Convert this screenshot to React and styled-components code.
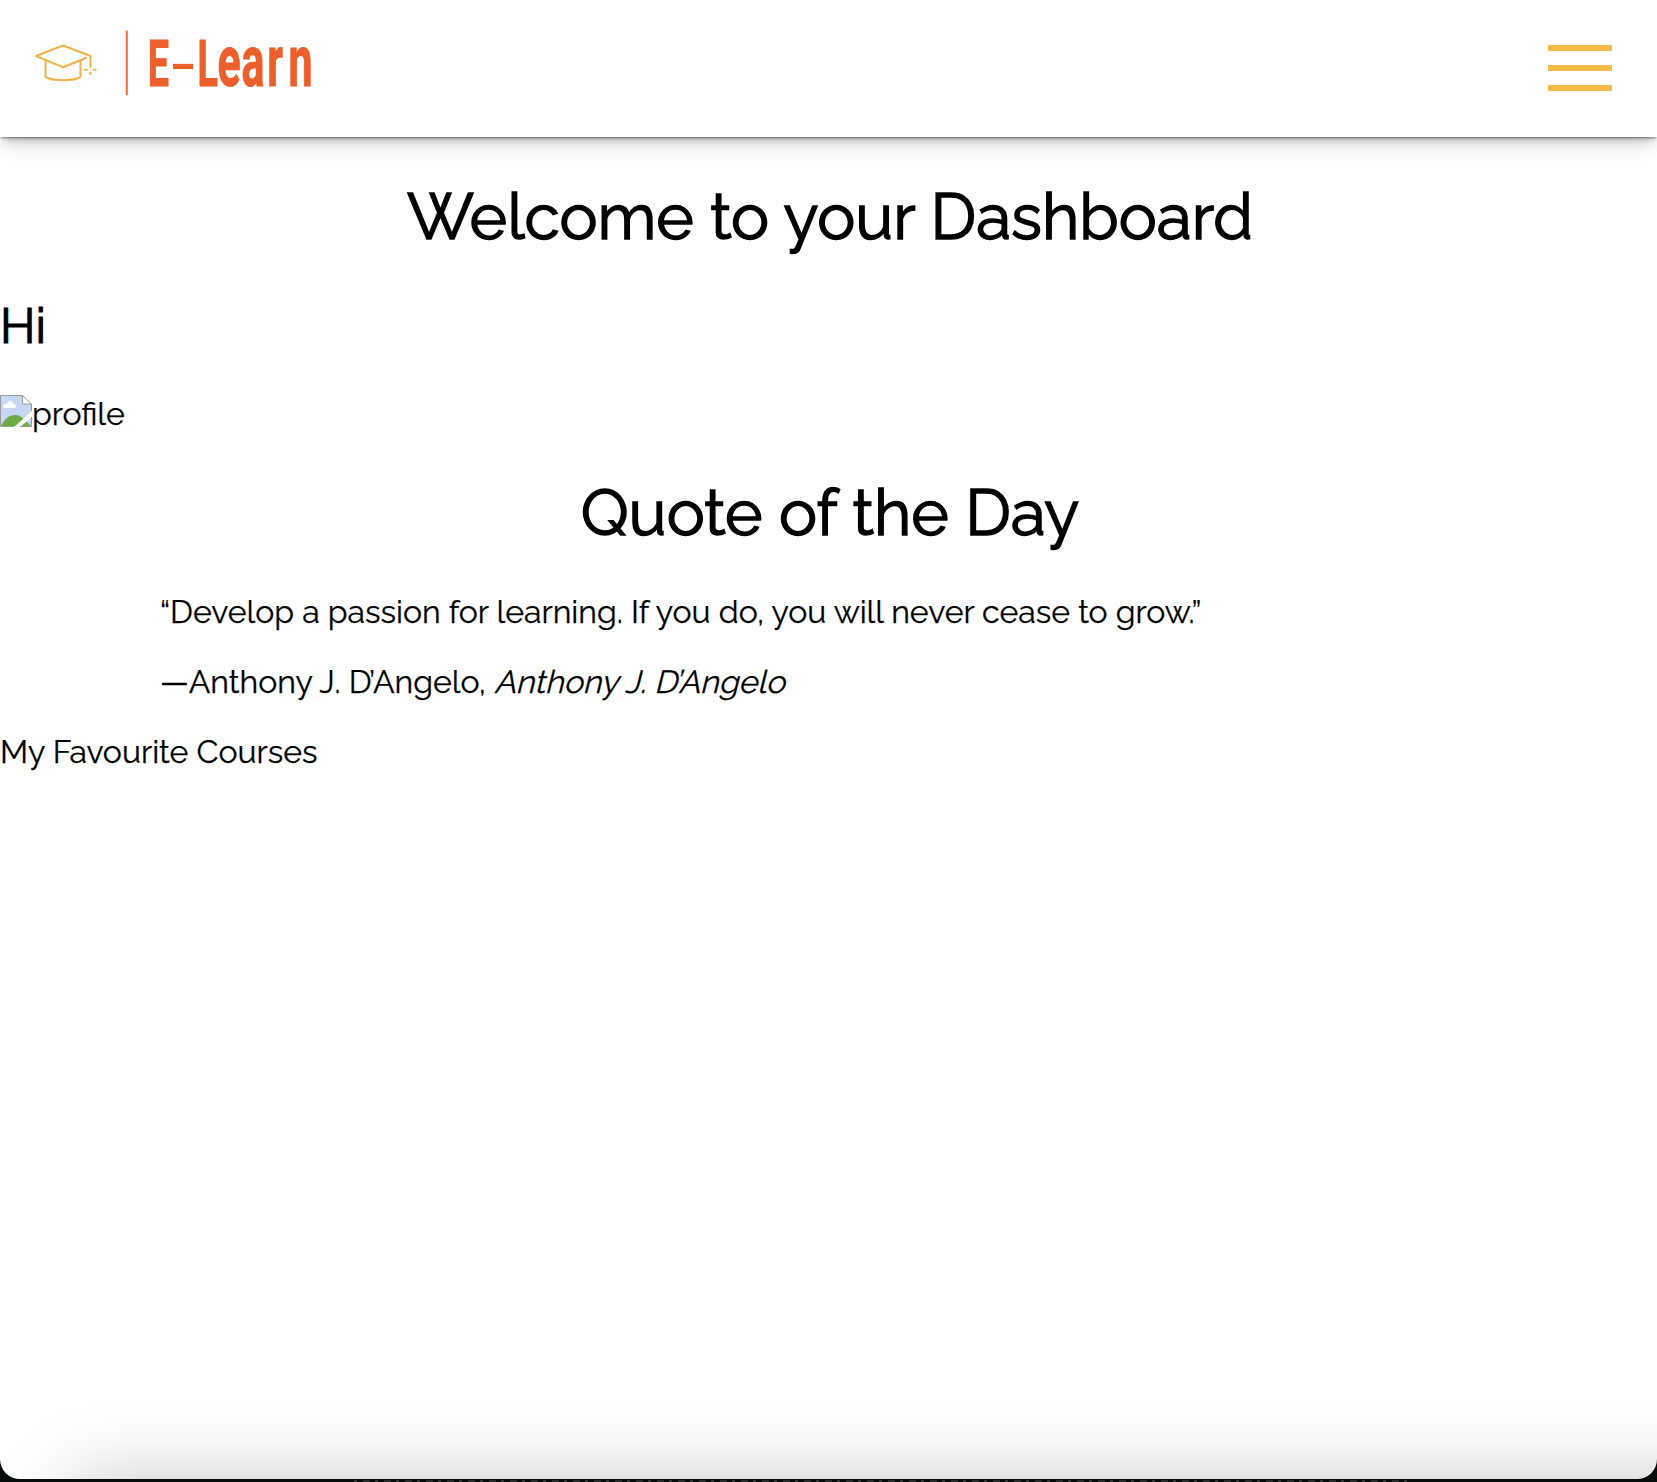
import React from "react";
import styled, { createGlobalStyle } from "styled-components";

const GlobalStyle = createGlobalStyle`
  * { box-sizing: border-box; }
  body {
    margin: 0;
    background: #060b0b;
    color: #000;
    font-family: Raleway, Lato, "Open Sans", sans-serif;
    font-size: 32px;
    line-height: 38px;
    -webkit-text-stroke: 0.25px #000;
  }
`;

const Desktop = styled.div`
  height: 1482px;
  overflow: hidden;
  display: flex;
  flex-direction: column;
  background: #060b0b;
`;

const Window = styled.div`
  position: relative;
  height: 1479px;
  flex: none;
  background: #fff;
  border-radius: 0 0 20px 20px;
  overflow: hidden;

  &::after {
    content: "";
    position: absolute;
    left: 72px;
    right: -120px;
    top: 100%;
    height: 200px;
    box-shadow: 0 0 78px rgba(0, 0, 0, 0.22);
    pointer-events: none;
  }
`;

const Backdrop = styled.div`
  height: 3px;
  margin: 0 250px 0 354px;
  background: repeating-linear-gradient(90deg, #303535 0 3px, transparent 3px 9px, #262b2b 9px 16px, transparent 16px 21px);
  clip-path: inset(1px 0 0 0);
`;

const Header = styled.header`
  display: flex;
  justify-content: space-between;
  height: 137px;
  padding: 0 45px 0 32px;
  background: #fff;
  box-shadow: 0 2px 2px -1px rgba(0, 0, 0, 0.4), 0 6px 6px -4px rgba(0, 0, 0, 0.22), 0 6px 20px -2px rgba(0, 0, 0, 0.24);
`;

const Logo = styled.svg`
  display: block;
  width: 300px;
  height: 137px;
  overflow: visible;
`;

const Wordmark = styled.text`
  font-family: Roboto, sans-serif;
  font-weight: 700;
  font-size: 65px;
  fill: #ec5e2a;
  stroke: #ec5e2a;
  stroke-width: ${(p) => p.$stroke}px;
`;

const MenuButton = styled.button`
  display: flex;
  flex-direction: column;
  gap: 14px;
  width: 64px;
  margin: 45px 0 0;
  padding: 0;
  border: 0;
  background: none;
`;

const MenuBar = styled.span`
  height: 6px;
  background: #f4bc45;
`;

const Title = styled.h1`
  margin: ${(p) => p.$top}px 0 0;
  padding-left: 3px;
  font-size: 64px;
  line-height: 76px;
  font-weight: 400;
  text-align: center;
  white-space: nowrap;
  -webkit-text-stroke: 1.5px #000;
`;

const Greeting = styled.h2`
  margin: 43px 0 0;
  font-size: 48px;
  line-height: 56px;
  font-weight: 400;
  -webkit-text-stroke: 1.1px #000;
`;

const Profile = styled.div`
  display: flex;
  height: 38px;
  margin-top: 40px;
`;

const AltText = styled.span`
  padding-top: 1px;
`;

const BrokenImage = styled.svg`
  width: 32px;
  height: 32px;
  margin-top: 1px;
`;

const Quote = styled.blockquote`
  margin: 42px 80px 0 160px;
`;

const Line = styled.p`
  margin: ${(p) => p.$top || 0}px 0 0;
  white-space: nowrap;
`;

const Source = styled.em`
  display: inline-block;
  font-style: normal;
  transform: skewX(-14deg);
  transform-origin: 0 78%;
`;

export default function App() {
  return (
    <>
      <GlobalStyle />
      <Desktop>
        <Window>
          <Header>
            <Logo viewBox="32 0 300 137">
              <g fill="none" stroke="#f3b248" strokeWidth="2" strokeLinejoin="round" strokeLinecap="round">
                <path d="M35.8 56L63 45.5L90.5 56V67M35.8 56L63 67.2L86 58" />
                <path d="M45.5 60.5V76C45.5 81.5 80.5 81.5 80.5 76V60.5" />
                <path d="M84.8 69.7H86.8M93.7 69.7H95.7M90.3 72.5V74" />
              </g>
              <path d="M126.8 31.5V94.5" stroke="#ef6c3e" strokeWidth="2" strokeLinecap="round" />
              <Wordmark $stroke={1} transform="translate(147.7 86) scale(0.58 1)">E</Wordmark>
              <Wordmark $stroke={0} transform="translate(169 80.8) scale(1.12 0.72)">-</Wordmark>
              <Wordmark $stroke={1} transform="translate(197.4 86) scale(0.58 1)">L</Wordmark>
              <Wordmark $stroke={0.8} transform="translate(0 86) scale(0.66 1.11)" x="329.5 366 405 437">
                earn
              </Wordmark>
            </Logo>
            <MenuButton aria-label="Menu">
              <MenuBar />
              <MenuBar />
              <MenuBar />
            </MenuButton>
          </Header>
          <main>
            <Title $top={42}>Welcome to your Dashboard</Title>
            <Greeting>Hi</Greeting>
            <Profile>
              <BrokenImage viewBox="0 0 32 32">
                <path d="M.5.5H22.5L31.5 9V31.5H.5Z" fill="#c6d6f5" />
                <path d="M4 13C2 10 5 8 7 9C8 5 13 5 13 9C17 9 17 13 14 13Z" fill="#fff" />
                <path d="M1 31C5 23 10 20 15 20C19 20 22 22 25 25L31 31Z" fill="#6dab46" />
                <path d="M14 32L32 16V22L20 32Z" fill="#fff" />
                <path d="M22.5.5V9H31.5Z" fill="#fff" />
                <path d="M14 31.5H.5V.5H22.5L31.5 9V16M22.5.5V9H31.5M20 31.5H31.5V22" fill="none" stroke="#9a9a9a" />
              </BrokenImage>
              <AltText>profile</AltText>
            </Profile>
            <Title $top={43}>Quote of the Day</Title>
            <Quote>
              <Line>“Develop a passion for learning. If you do, you will never cease to grow.”</Line>
              <Line $top={32}>
                —Anthony J. D’Angelo, <Source>Anthony J. D’Angelo</Source>
              </Line>
            </Quote>
            <Line $top={32}>My Favourite Courses</Line>
          </main>
        </Window>
        <Backdrop />
      </Desktop>
    </>
  );
}
